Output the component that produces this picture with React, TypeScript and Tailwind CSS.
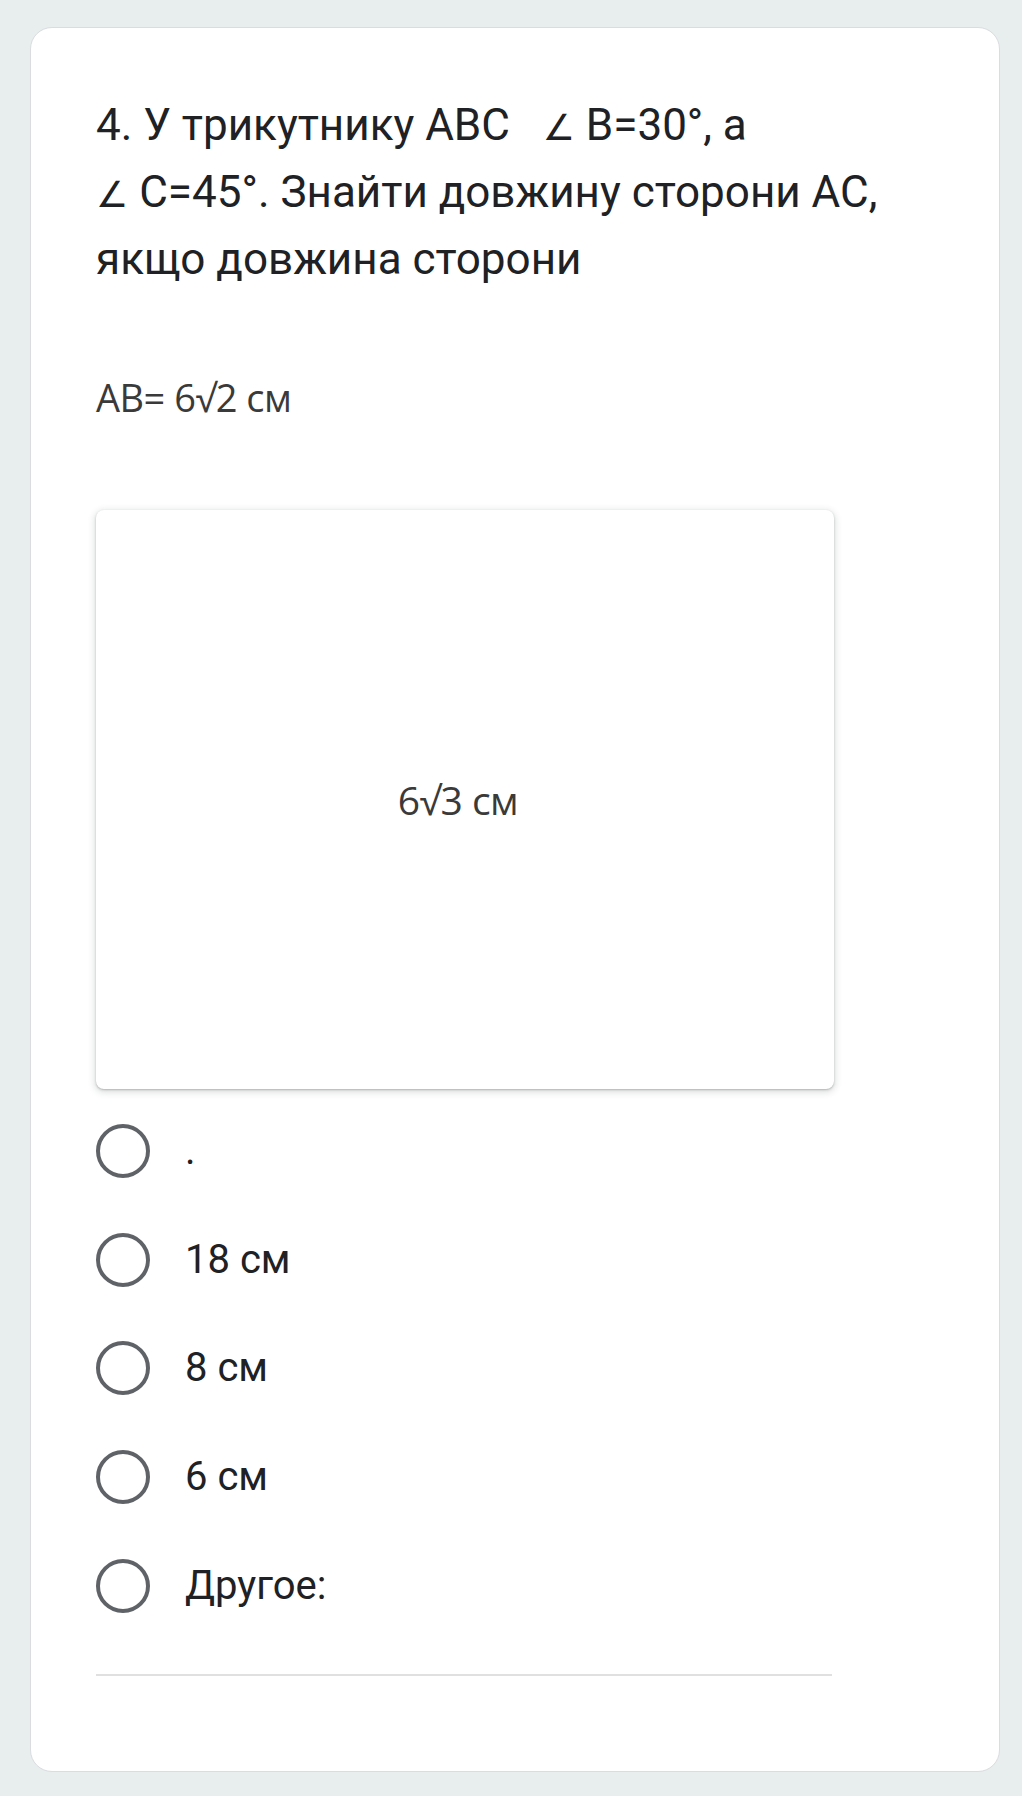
import React from "react";

const Radio = ({ label }: { label: string }) => (
  <div className="flex items-center h-[108.6px]">
    <div className="w-[54px] h-[54px] rounded-full border-[4.5px] border-[#5f6368] shrink-0" />
    <span className="ml-[35px] text-[40px] text-[#202124] leading-none">{label}</span>
  </div>
);

const Angle = () => (
  <span className="text-[36px] text-[#202124]" style={{ fontFamily: "'DejaVu Sans', sans-serif" }}>
    ∠
  </span>
);

export default function App() {
  return (
    <div
      className="min-h-[1796px] w-[1022px] bg-[#e7eeed] pt-[27px] pl-[30px] pb-[24px]"
      style={{ fontFamily: "Roboto, 'Noto Sans', sans-serif" }}
    >
      <div className="w-[970px] h-[1745px] bg-white rounded-[22px] border border-[#dadce0] pl-[65px] pt-[65px]">
        <div className="text-[44px] leading-[65px] text-[#202124] whitespace-pre-wrap w-[860px]">
          {"4. У трикутнику ABC   "}
          <Angle />
          {" B=30°, а"}
          <br />
          <Angle />
          {" C=45°. Знайти довжину сторони AC,"}
          <br />
          {"якщо довжина сторони"}
        </div>

        <div
          className="mt-[82px] h-[46px] text-[38px] leading-[46px] text-[#3a3a3a] tracking-[-0.5px]"
          style={{ fontFamily: "'Open Sans', sans-serif" }}
        >
          AB= 6√2 см
        </div>

        <div className="mt-[90px] w-[738px] h-[579px] rounded-[8px] bg-white shadow-[0_1px_2px_rgba(60,64,67,0.3),0_2px_6px_2px_rgba(60,64,67,0.15)] flex items-center justify-center pr-[14px]">
          <span
            className="text-[39px] leading-none text-[#3a3a3a] tracking-[-0.5px]"
            style={{ fontFamily: "'Open Sans', sans-serif" }}
          >
            6√3 см
          </span>
        </div>

        <div className="mt-[8px]">
          <Radio label="." />
          <Radio label="18 см" />
          <Radio label="8 см" />
          <Radio label="6 см" />
          <Radio label="Другое:" />
        </div>

        <div className="mt-[34px] w-[736px] h-[2px] bg-[#e0e0e0]" />
      </div>
    </div>
  );
}
